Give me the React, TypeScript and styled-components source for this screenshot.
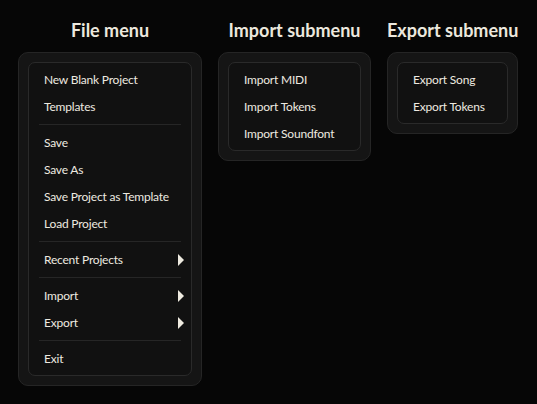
import React from 'react';
import styled, { createGlobalStyle } from 'styled-components';

const GlobalStyle = createGlobalStyle`
  html, body {
    margin: 0;
    padding: 0;
    background: #060606;
    font-family: Lato, "Noto Sans", sans-serif;
  }
`;

type Entry = { label: string; submenu?: boolean } | 'sep';

const fileMenu: Entry[] = [
  { label: 'New Blank Project' },
  { label: 'Templates' },
  'sep',
  { label: 'Save' },
  { label: 'Save As' },
  { label: 'Save Project as Template' },
  { label: 'Load Project' },
  'sep',
  { label: 'Recent Projects', submenu: true },
  'sep',
  { label: 'Import', submenu: true },
  { label: 'Export', submenu: true },
  'sep',
  { label: 'Exit' },
];

const importMenu: Entry[] = [
  { label: 'Import MIDI' },
  { label: 'Import Tokens' },
  { label: 'Import Soundfont' },
];

const exportMenu: Entry[] = [{ label: 'Export Song' }, { label: 'Export Tokens' }];

function Menu({ title, width, items }: { title: string; width: number; items: Entry[] }) {
  return (
    <Column $width={width}>
      <Title>{title}</Title>
      <Panel>
        <List>
          {items.map((item, i) =>
            item === 'sep' ? (
              <Separator key={i} />
            ) : (
              <Item key={i}>
                <span>{item.label}</span>
                {item.submenu && <Arrow />}
              </Item>
            )
          )}
        </List>
      </Panel>
    </Column>
  );
}

export default function App() {
  return (
    <>
      <GlobalStyle />
      <Page>
        <Menu title="File menu" width={184} items={fileMenu} />
        <Menu title="Import submenu" width={153} items={importMenu} />
        <Menu title="Export submenu" width={131} items={exportMenu} />
      </Page>
    </>
  );
}

const Page = styled.div`
  display: flex;
  align-items: flex-start;
  gap: 16px;
  padding: 20px 18px;
  min-height: 404px;
  box-sizing: border-box;
`;

const Column = styled.section<{ $width: number }>`
  width: ${(p) => p.$width}px;
  display: flex;
  flex-direction: column;
`;

const Title = styled.h2`
  margin: 0 0 12px;
  height: 20px;
  line-height: 20px;
  text-align: center;
  font-size: 18px;
  font-weight: 700;
  color: #ece8de;
  white-space: nowrap;
`;

const Panel = styled.div`
  background: #151515;
  border: 1px solid #252525;
  border-radius: 10px;
  padding: 9px;
`;

const List = styled.ul`
  list-style: none;
  margin: 0;
  padding: 3px 0;
  background: #111111;
  border: 1px solid #2a2a2a;
  border-radius: 7px;
`;

const Item = styled.li`
  display: flex;
  align-items: center;
  justify-content: space-between;
  height: 27px;
  padding: 0 7px 0 15px;
  font-size: 12px;
  letter-spacing: -0.2px;
  color: #eeeae0;
  white-space: nowrap;
`;

const Arrow = styled.span`
  width: 0;
  height: 0;
  border-top: 6px solid transparent;
  border-bottom: 6px solid transparent;
  border-left: 6px solid #eeeae0;
`;

const Separator = styled.li`
  height: 1px;
  margin: 4px 10px;
  background: #262626;
`;
